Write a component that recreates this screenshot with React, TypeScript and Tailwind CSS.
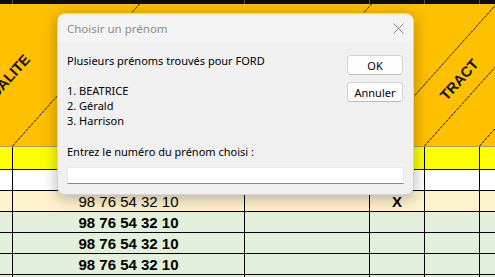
import React from 'react';

const cols = 'grid grid-cols-[13px_232px_125px_55px_55px_1fr]';
const cell = 'border-r border-black';

const phone = '98 76 54 32 10';

const rows = [
  { bg: 'bg-[#fff2cc]', bold: false, mark: 'X' },
  { bg: 'bg-[#e2efda]', bold: true, mark: '' },
  { bg: 'bg-[#e2efda]', bold: true, mark: '' },
  { bg: 'bg-[#e2efda]', bold: true, mark: '' },
];

// bottoms of the slanted header borders
const slants = [12, 244, 369, 424, 479];

const Header = () => (
  <div className="relative h-[142px] bg-[#ffc000]">
    <svg className="absolute inset-0" width="495" height="142" viewBox="0 0 495 142">
      {slants.map((x) => (
        <line key={x} x1={x + 0.5} y1={142} x2={x + 127.5} y2={0} stroke="#000" strokeWidth="0.9" strokeDasharray="3 1" />
      ))}
      <text x="31" y="56" textAnchor="end" transform="rotate(-48 31 56)" fontFamily="Liberation Sans, Arial, sans-serif" fontWeight="bold" fontSize="14.5" fill="#111">
        QUALITE
      </text>
      <text x="463" y="79" textAnchor="middle" transform="rotate(-48 463 79)" fontFamily="Liberation Sans, Arial, sans-serif" fontWeight="bold" fontSize="14.5" fill="#111">
        TRACT
      </text>
    </svg>
  </div>
);

const Sheet = () => (
  <div className="flex flex-col font-['Liberation_Sans',Arial,sans-serif] text-[15px] text-black">
    {/* strip of the row above */}
    <div className={`${cols} h-[4px] bg-[#0d0d0d]`}>
      <div className="border-r border-[#555]" />
      <div className="border-r border-[#555]" />
      <div className="border-r border-[#555]" />
      <div className="border-r border-[#555]" />
      <div className="border-r border-[#555]" />
      <div />
    </div>
    <Header />
    <div className="h-px bg-[#a8a070]" />
    <div className={`${cols} h-[23px] bg-[#ffff00] border-b border-black`}>
      <div className={cell} /><div className={cell} /><div className={cell} /><div className={cell} /><div className={cell} /><div />
    </div>
    <div className={`${cols} h-[21px] bg-white border-b border-black`}>
      <div className={cell} /><div className={cell} /><div className={cell} /><div className={cell} /><div className={cell} /><div />
    </div>
    {rows.map((r, i) => (
      <div key={i} className={`${cols} h-[21px] ${r.bg} border-b border-black`}>
        <div className={cell} />
        <div className={`${cell} flex items-center justify-center leading-none ${r.bold ? 'font-bold' : ''}`}>{phone}</div>
        <div className={cell} />
        <div className={`${cell} flex items-center justify-center font-bold leading-none`}>{r.mark}</div>
        <div className={cell} />
        <div />
      </div>
    ))}
    <div className={`${cols} h-[4px] bg-[#e2efda]`}>
      <div className={cell} /><div className={cell} /><div className={cell} /><div className={cell} /><div className={cell} /><div />
    </div>
  </div>
);

const Dialog = () => (
  <div className="absolute left-[57px] top-[13px] w-[357px] h-[182px] flex flex-col rounded-[8px] bg-[#f0f0f0] border border-[#d6d6d6] shadow-[0_3px_16px_rgba(0,0,0,0.3)] font-['Noto_Sans',sans-serif] text-[11px] text-black overflow-hidden">
    <div className="h-[29px] shrink-0 flex items-center justify-between pl-[9px] pr-[9px] bg-[#f3f3f3] text-[#8c8c8c] text-[11.5px]">
      <span>Choisir un prénom</span>
      <svg width="11" height="11" viewBox="0 0 11 11">
        <path d="M0.5 0.5L10.5 10.5M10.5 0.5L0.5 10.5" stroke="#8a8a8a" strokeWidth="1" />
      </svg>
    </div>
    <div className="flex">
      <div className="flex flex-col pl-[9px] pt-[10px] leading-[15px]">
        <span>Plusieurs prénoms trouvés pour FORD</span>
        <span>&nbsp;</span>
        <span>1. BEATRICE</span>
        <span>2. Gérald</span>
        <span>3. Harrison</span>
      </div>
      <div className="ml-auto flex flex-col gap-[7px] pt-[12px] pr-[10px]">
        <button className="w-[56px] h-[20px] rounded-[4px] bg-[#fdfdfd] border border-[#d3d3d3] border-b-[#bdbdbd] leading-none">OK</button>
        <button className="w-[56px] h-[20px] rounded-[4px] bg-[#fdfdfd] border border-[#d3d3d3] border-b-[#bdbdbd] leading-none">Annuler</button>
      </div>
    </div>
    <div className="pl-[9px] mt-[16px] leading-[15px]">Entrez le numéro du prénom choisi :</div>
    <div className="ml-[9px] mt-[8px] w-[337px] h-[17px] bg-white border border-[#e6e6e6] border-b-[#8a8a8a]" />
  </div>
);

export default function App() {
  return (
    <div className="relative w-[495px] h-[277px] overflow-hidden bg-white">
      <Sheet />
      <Dialog />
    </div>
  );
}
